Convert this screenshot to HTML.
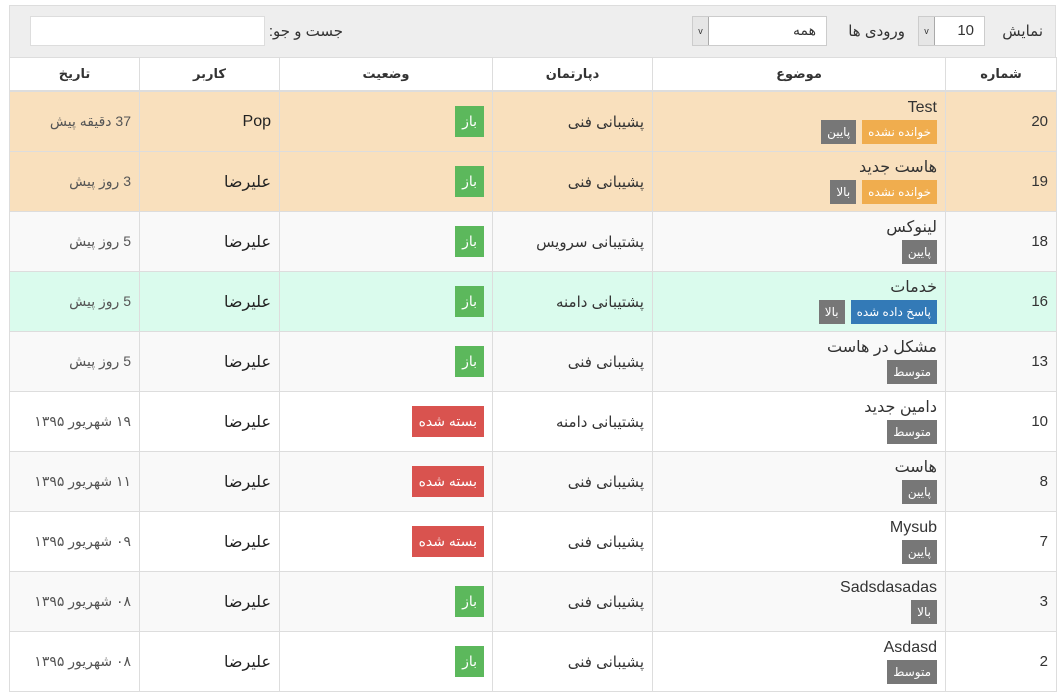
<!DOCTYPE html>
<html><head><meta charset="utf-8"><style>
body{margin:0;background:#fff;font-family:"Liberation Sans","DejaVu Sans",sans-serif;color:#333;}
.wrap{position:absolute;left:9px;top:5px;width:1047px;}
.bar{height:51px;background:#eee;border:1px solid #ddd;border-bottom:none;position:relative;direction:rtl;font-size:15px;}
.bar span{position:absolute;top:16px;}
.box{position:absolute;background:#fff;border:1px solid #ccc;box-sizing:border-box;height:30px;top:10px;}
.dd{position:absolute;width:15px;height:28px;top:0;left:0;background:#e6e6e6;border-right:1px solid #aaa;font-size:9px;text-align:center;line-height:28px;}
table{border-collapse:collapse;table-layout:fixed;width:1047px;direction:rtl;font-size:15px;}
td,th{border:1px solid #ddd;padding:0 8px;text-align:right;}
th{height:32px;font-size:13px;text-align:center;border-bottom:2px solid #ddd;background:#fff;}
td{height:59px;}
.t{line-height:18px;font-size:16px;}
.lb{display:inline-block;color:#fff;font-size:12px;padding:0 6px;height:24px;line-height:24px;margin-left:6px;margin-top:3px;}
.g{background:#5cb85c}.r{background:#d9534f}.o{background:#f0ad4e}.d{background:#777}.b{background:#337ab7}
.st .lb{font-size:14px;padding:0 7px;height:31px;line-height:31px;margin:0;}
.w{background:#f9e0bd}.s{background:#f9f9f9}.gr{background:#dafbed}
.dt{color:#555;font-size:14px}
.u{font-size:16px;color:#222}
</style></head><body>
<div class="wrap">
<div class="bar">
<span style="right:12px">نمایش</span>
<div class="box" style="right:70px;width:67px;"><div class="dd">v</div><span style="top:5px;right:10px">10</span></div>
<span style="right:150px">ورودی ها</span>
<div class="box" style="right:228px;width:135px;"><div class="dd">v</div><span style="top:5px;right:10px;font-size:14px">همه</span></div>
<span style="right:712px">جست و جو:</span>
<div class="box" style="right:790px;width:235px;border-color:#ddd;"></div>
</div>
<table>
<colgroup><col style="width:111px"><col style="width:293px"><col style="width:160px"><col style="width:213px"><col style="width:140px"><col style="width:130px"></colgroup>
<tr><th>شماره</th><th>موضوع</th><th>دپارتمان</th><th>وضعیت</th><th>کاربر</th><th>تاریخ</th></tr>
<tr class="w"><td>20</td><td><div class="t">Test</div><span class="lb o">خوانده نشده</span><span class="lb d">پایین</span></td><td>پشیبانی فنی</td><td class="st"><span class="lb g">باز</span></td><td class="u">Pop</td><td class="dt">37 دقیقه پیش</td></tr>
<tr class="w"><td>19</td><td><div class="t">هاست جدید</div><span class="lb o">خوانده نشده</span><span class="lb d">بالا</span></td><td>پشیبانی فنی</td><td class="st"><span class="lb g">باز</span></td><td class="u">علیرضا</td><td class="dt">3 روز پیش</td></tr>
<tr class="s"><td>18</td><td><div class="t">لینوکس</div><span class="lb d">پایین</span></td><td>پشتیبانی سرویس</td><td class="st"><span class="lb g">باز</span></td><td class="u">علیرضا</td><td class="dt">5 روز پیش</td></tr>
<tr class="gr"><td>16</td><td><div class="t">خدمات</div><span class="lb b">پاسخ داده شده</span><span class="lb d">بالا</span></td><td>پشتیبانی دامنه</td><td class="st"><span class="lb g">باز</span></td><td class="u">علیرضا</td><td class="dt">5 روز پیش</td></tr>
<tr class="s"><td>13</td><td><div class="t">مشکل در هاست</div><span class="lb d">متوسط</span></td><td>پشیبانی فنی</td><td class="st"><span class="lb g">باز</span></td><td class="u">علیرضا</td><td class="dt">5 روز پیش</td></tr>
<tr><td>10</td><td><div class="t">دامین جدید</div><span class="lb d">متوسط</span></td><td>پشتیبانی دامنه</td><td class="st"><span class="lb r">بسته شده</span></td><td class="u">علیرضا</td><td class="dt">۱۹ شهریور ۱۳۹۵</td></tr>
<tr class="s"><td>8</td><td><div class="t">هاست</div><span class="lb d">پایین</span></td><td>پشیبانی فنی</td><td class="st"><span class="lb r">بسته شده</span></td><td class="u">علیرضا</td><td class="dt">۱۱ شهریور ۱۳۹۵</td></tr>
<tr><td>7</td><td><div class="t">Mysub</div><span class="lb d">پایین</span></td><td>پشیبانی فنی</td><td class="st"><span class="lb r">بسته شده</span></td><td class="u">علیرضا</td><td class="dt">۰۹ شهریور ۱۳۹۵</td></tr>
<tr class="s"><td>3</td><td><div class="t">Sadsdasadas</div><span class="lb d">بالا</span></td><td>پشیبانی فنی</td><td class="st"><span class="lb g">باز</span></td><td class="u">علیرضا</td><td class="dt">۰۸ شهریور ۱۳۹۵</td></tr>
<tr><td>2</td><td><div class="t">Asdasd</div><span class="lb d">متوسط</span></td><td>پشیبانی فنی</td><td class="st"><span class="lb g">باز</span></td><td class="u">علیرضا</td><td class="dt">۰۸ شهریور ۱۳۹۵</td></tr>
</table>
</div>
</body></html>
